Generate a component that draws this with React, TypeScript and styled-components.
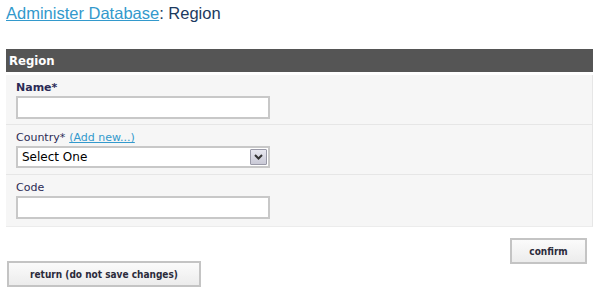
import React from 'react';
import styled, { createGlobalStyle } from 'styled-components';

const GlobalStyle = createGlobalStyle`
  html, body { margin: 0; padding: 0; background: #fff; }
  body { font-family: "DejaVu Sans", Verdana, sans-serif; }
`;

const LINK = '#3399cc';
const LABEL = '#2b2b55';

const Page = styled.div`
  width: 587px;
  padding: 0 6px;
`;

const Title = styled.h1`
  margin: 0;
  padding-top: 3px;
  height: 46px;
  font-family: "Liberation Sans", Arial, sans-serif;
  font-size: 16.5px;
  font-weight: normal;
  line-height: 21px;
  color: #1c3a60;

  a { color: ${LINK}; text-decoration: underline; }
`;

const Bar = styled.div`
  height: 23px;
  background: #555555;
  color: #fff;
  font-family: "DejaVu Sans Condensed", "DejaVu Sans", sans-serif;
  font-weight: bold;
  font-size: 13px;
  line-height: 23px;
  padding-left: 3px;
`;

const Panel = styled.div`
  margin-top: 3px;
  background: #f6f6f6;
  border-right: 1px solid #e6e6e6;
  border-bottom: 1px solid #ececec;
`;

const Row = styled.div<{ $last?: boolean }>`
  padding: 5px 0 0 10px;
  height: ${p => (p.$last ? 46 : 44)}px;
  border-bottom: ${p => (p.$last ? 'none' : '1px solid #e6e6e6')};
`;

const Label = styled.label<{ $bold?: boolean }>`
  display: block;
  height: 16px;
  font-family: "DejaVu Sans", Verdana, sans-serif;
  font-size: 11px;
  line-height: 16px;
  font-weight: ${p => (p.$bold ? 'bold' : 'normal')};
  color: ${LABEL};

  a {
    color: ${LINK};
    text-decoration: underline;
    margin-left: 4px;
    font-weight: normal;
  }
`;

const TextInput = styled.input`
  display: block;
  box-sizing: border-box;
  width: 254px;
  height: 23px;
  margin: 0;
  border: 2px solid #c8c8c8;
  background: #fff;
`;

const SelectWrap = styled.div`
  position: relative;
  width: 254px;
  height: 22px;
`;

const Select = styled.select`
  box-sizing: border-box;
  width: 254px;
  height: 22px;
  margin: 0;
  padding: 0 0 0 4px;
  appearance: none;
  border: 2px solid #c8c8c8;
  background: #fff;
  font-family: "DejaVu Sans", Verdana, sans-serif;
  font-size: 12px;
  color: #000;
`;

const Arrow = styled.span`
  position: absolute;
  right: 3px;
  top: 3px;
  width: 15px;
  height: 14px;
  border: 1px solid #9a9aa8;
  border-radius: 1px;
  background: linear-gradient(#e8e8f0, #c9c9d6);
  display: flex;
  align-items: center;
  justify-content: center;
  pointer-events: none;
`;

const Actions = styled.div`
  display: flex;
  flex-direction: column;
  padding-top: 11px;
`;

const Button = styled.button<{ $right?: boolean; $width: number }>`
  align-self: ${p => (p.$right ? 'flex-end' : 'flex-start')};
  box-sizing: border-box;
  width: ${p => p.$width}px;
  height: 26px;
  margin: ${p => (p.$right ? '0 6px 0 0' : '-3px 0 0 1px')};
  padding: 0;
  border: 2px solid #c4c4c4;
  background: linear-gradient(#fbfbfb, #ececec);
  font-family: "DejaVu Sans Condensed", "DejaVu Sans", sans-serif;
  font-weight: bold;
  font-size: 10px;
  color: #2b2b3b;
  cursor: pointer;
`;

export default function App() {
  return (
    <Page>
      <GlobalStyle />
      <Title>
        <a href="#">Administer Database</a>: Region
      </Title>
      <Bar>Region</Bar>
      <Panel>
        <Row>
          <Label $bold>Name*</Label>
          <TextInput type="text" />
        </Row>
        <Row>
          <Label>
            Country*<a href="#">(Add new...)</a>
          </Label>
          <SelectWrap>
            <Select defaultValue="">
              <option value="">Select One</option>
            </Select>
            <Arrow>
              <svg width="9" height="6" viewBox="0 0 9 6">
                <path d="M1 1 L4.5 4.5 L8 1" stroke="#333" strokeWidth="2" fill="none" />
              </svg>
            </Arrow>
          </SelectWrap>
        </Row>
        <Row $last>
          <Label>Code</Label>
          <TextInput type="text" />
        </Row>
      </Panel>
      <Actions>
        <Button $right $width={77}>confirm</Button>
        <Button $width={194}>return (do not save changes)</Button>
      </Actions>
    </Page>
  );
}
